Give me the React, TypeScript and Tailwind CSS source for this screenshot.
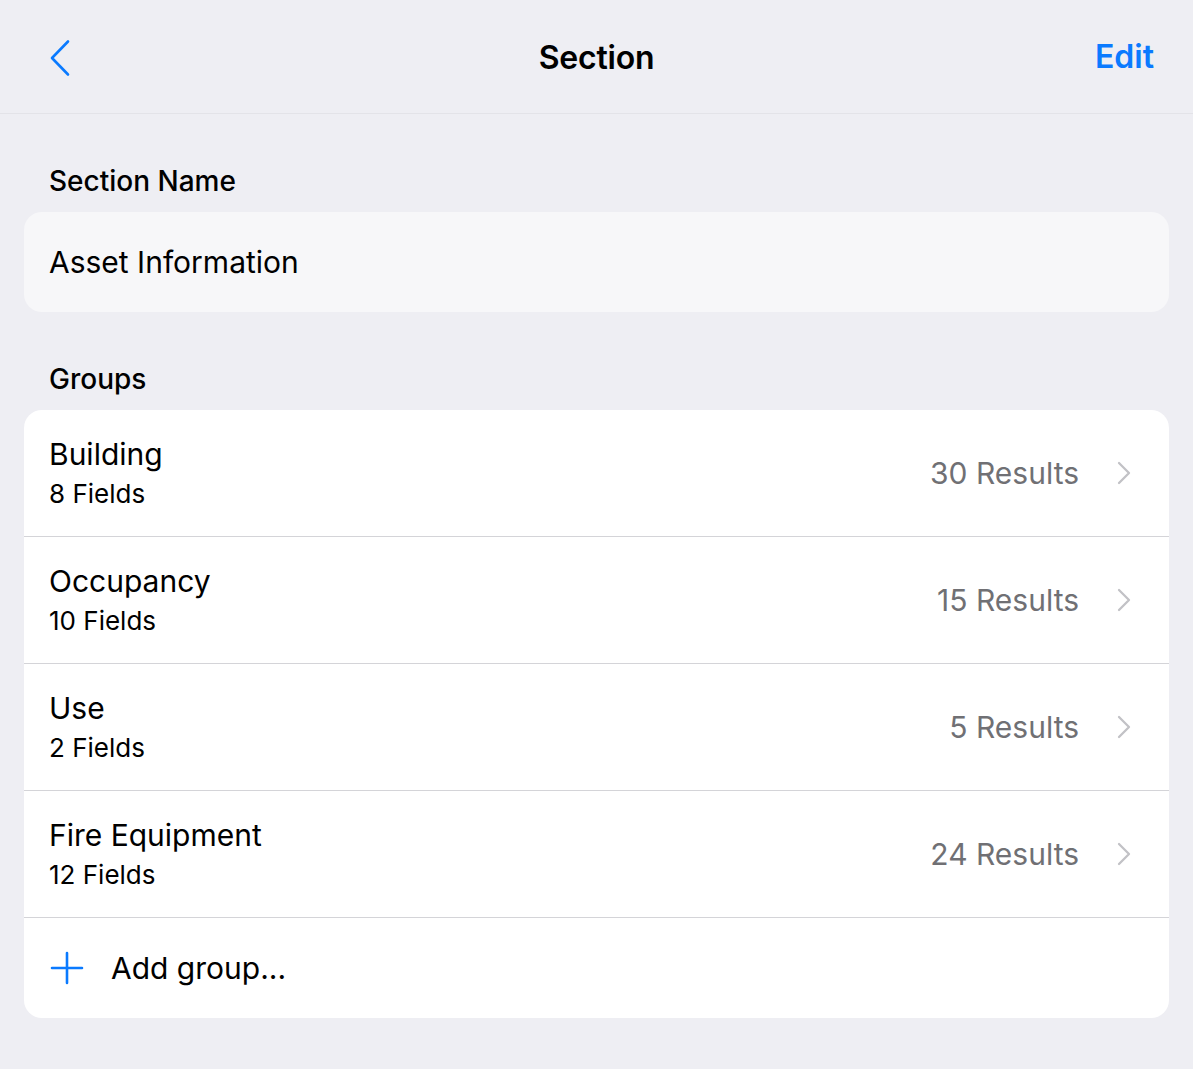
// ── Data ───────────────────────────────────────────────────────────────────

const GROUPS = [
  { name: "Building", fields: 8, results: 30 },
  { name: "Occupancy", fields: 10, results: 15 },
  { name: "Use", fields: 2, results: 5 },
  { name: "Fire Equipment", fields: 12, results: 24 },
];

// ── Icons ──────────────────────────────────────────────────────────────────

function BackChevron() {
  return (
    <svg width="22" height="38" viewBox="0 0 22 38" fill="none">
      <path d="M19 2.5 3 19l16 16.5" stroke="#0a7aff" strokeWidth="2.6" strokeLinecap="round" strokeLinejoin="round" />
    </svg>
  );
}

function RowChevron() {
  return (
    <svg width="14" height="24" viewBox="0 0 14 24" fill="none">
      <path d="M2 2l10 10L2 22" stroke="#c2c2c6" strokeWidth="2.3" strokeLinecap="round" strokeLinejoin="round" />
    </svg>
  );
}

function PlusIcon() {
  return (
    <svg width="34" height="34" viewBox="0 0 34 34" fill="none">
      <path d="M17 2v30M2 17h30" stroke="#0a7aff" strokeWidth="2.6" strokeLinecap="round" />
    </svg>
  );
}

// ── Component ──────────────────────────────────────────────────────────────

export default function App() {
  return (
    <div
      className="min-h-[1069px] bg-[#eeeef3] text-black"
      style={{ fontFamily: "Inter, 'Noto Sans', sans-serif" }}
    >
      {/* Nav bar */}
      <header className="h-[114px] border-b border-[#e3e3e8] flex items-center justify-between pl-[49px] pr-[39px] relative">
        <button className="mt-[2px]">
          <BackChevron />
        </button>
        <h1 className="absolute left-1/2 -translate-x-1/2 mt-[3px] text-[32px] font-semibold tracking-[-0.2px]">
          Section
        </h1>
        <button className="text-[#0a7aff] text-[32px] font-semibold">Edit</button>
      </header>

      <main className="px-[24px]">
        {/* Section name */}
        <p className="pl-[25px] pt-[50px] pb-[14px] text-[28px] font-medium leading-[34px]">
          Section Name
        </p>
        <div className="h-[100px] rounded-[18px] bg-[#f7f7f9] flex items-center px-[25px] text-[30px]">
          Asset Information
        </div>

        {/* Groups */}
        <p className="pl-[25px] pt-[50px] pb-[14px] text-[28px] font-medium leading-[34px]">
          Groups
        </p>
        <div className="rounded-[18px] bg-white overflow-hidden">
          {GROUPS.map((g) => (
            <div
              key={g.name}
              className="h-[127px] border-b border-[#d4d4d8] flex items-center pl-[25px] pr-[38px]"
            >
              <div className="flex-1 flex flex-col mt-[1px]">
                <span className="text-[30px] leading-[40px]">{g.name}</span>
                <span className="text-[26px] leading-[40px]">{g.fields} Fields</span>
              </div>
              <span className="text-[30px] text-[#707074] mr-[38px]">{g.results} Results</span>
              <RowChevron />
            </div>
          ))}
          <div className="h-[100px] flex items-center pl-[25px]">
            <div className="ml-[1px]">
              <PlusIcon />
            </div>
            <span className="ml-[27px] text-[30px]">Add group...</span>
          </div>
        </div>
      </main>
    </div>
  );
}
